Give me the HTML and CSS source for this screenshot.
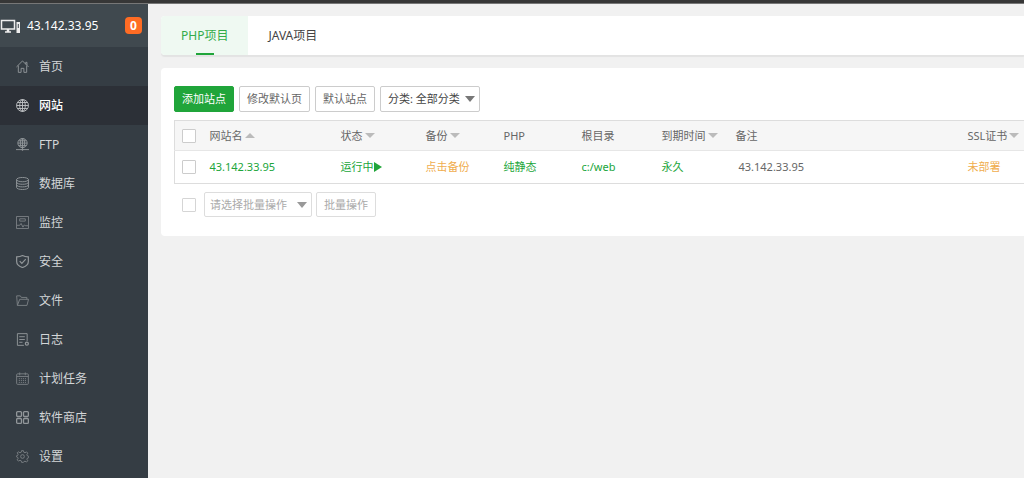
FILE: index.html
```html
<!DOCTYPE html>
<html lang="zh-CN">
<head>
<meta charset="utf-8">
<meta name="viewport" content="width=device-width, initial-scale=1">
<title>网站</title>
<link rel="stylesheet" href="styles.css">
</head>
<body>
<div class="topbar"></div>
<div class="layout">
  <aside class="sidebar">
    <div class="server">
      <svg class="server-icon" viewBox="0 0 20 14" fill="none" stroke="currentColor" stroke-width="1.500"><path d="M1.500 1.500h13v8.500H1.500zM5 13h6"/><path d="M8 10v3" stroke-width="2.500"/><path d="M16.500 3H20v11h-3.500z" fill="currentColor" stroke="none"/><path d="M18.300 5v4" stroke="#40494f" stroke-width="1"/></svg>
      <span class="server-ip">43.142.33.95</span>
      <span class="badge">0</span>
    </div>
    <nav class="menu">
      <a class="menu-item" href="#"><svg class="icon" viewBox="0 0 14 14"><path d="M.5 7.500 7 1l6.500 6.500M2.500 6v7.300h3V9h3v4.300h3V6M10.500 4.500V2.500h1.300V5.500"/></svg>首页</a>
      <a class="menu-item active" href="#"><svg class="icon" viewBox="0 0 14 14"><circle cx="7" cy="7" r="6.400"/><ellipse cx="7" cy="7" rx="3" ry="6.400"/><path d="M7 .6v12.800M.6 7h12.800M2 3.800h10M2 10.200h10"/></svg>网站</a>
      <a class="menu-item" href="#"><svg class="icon" viewBox="0 0 14 14"><circle cx="7" cy="5.500" r="5"/><ellipse cx="7" cy="5.500" rx="2.300" ry="5"/><path d="M2 5.500h10M3 3h8M3 8h8M7 .5v11M0 12.500h14"/><circle cx="7" cy="12.500" r=".8"/></svg>FTP</a>
      <a class="menu-item" href="#"><svg class="icon" viewBox="0 0 14 14"><ellipse cx="7" cy="2.800" rx="6.400" ry="2.300"/><path d="M.6 2.800v8.400c0 3 12.800 3 12.800 0V2.800M.6 5.600c0 3 12.800 3 12.800 0M.6 8.400c0 3 12.800 3 12.800 0"/></svg>数据库</a>
      <a class="menu-item" href="#"><svg class="icon dim" viewBox="0 0 14 14"><path d="M.5.5h13v13H.5zM4 3h6M4 5.500h6M4 3v2.500M10 3v2.500M1 10h3l1.500-2 2 4L9 9.500l1 1h3"/></svg>监控</a>
      <a class="menu-item" href="#"><svg class="icon" viewBox="0 0 14 14"><path d="M7 .6c2 1.200 4 1.500 6.300 1.500V7c0 3-2.500 5.200-6.300 6.500C3.200 12.200.7 10 .7 7V2.100C3 2.100 5 1.800 7 .6z" stroke-width="1.300"/><path d="m4 6.500 2.300 2.500L10.500 4.500" stroke-width="1.300"/></svg>安全</a>
      <a class="menu-item" href="#"><svg class="icon dim" viewBox="0 0 14 14"><path d="M1.500 12.300.7 2h4l1 1.700h6v2M1.500 12.300h10.300l1.700-6.600H4L1.500 12.300"/></svg>文件</a>
      <a class="menu-item" href="#"><svg class="icon" viewBox="0 0 14 14"><path d="M8.500 13.300H1.500V.7h10.500v7.800M3.500 4h6M3.500 7h6M3.500 10H7"/><circle cx="11.700" cy="11.500" r="1.600" stroke-width="1.400"/></svg>日志</a>
      <a class="menu-item" href="#"><svg class="icon dim" viewBox="0 0 14 14"><rect x=".7" y="2" width="12.600" height="11.300" rx="1"/><path d="M.7 4.800h12.600M4 .5v3M10 .5v3"/><path d="M3 7.200h8M3 9.200h8M3 11.200h8" stroke-dasharray="1.200 1"/></svg>计划任务</a>
      <a class="menu-item" href="#"><svg class="icon" viewBox="0 0 14 14" stroke-width="1.400"><rect x=".7" y=".7" width="5.200" height="5.200" rx="1"/><rect x="8.100" y=".7" width="5.200" height="5.200" rx="1"/><rect x=".7" y="8.100" width="5.200" height="5.200" rx="1"/><rect x="8.100" y="8.100" width="5.200" height="5.200" rx="1"/></svg>软件商店</a>
      <a class="menu-item" href="#"><svg class="icon dim" viewBox="0 0 14 14"><path d="M6 .7h2l.4 1.700 1.300.6 1.600-1 1.400 1.400-1 1.600.6 1.300 1.300.4v1.600l-1.300.5-.6 1.200 1 1.600-1.400 1.400-1.600-1-1.300.6L8 13.300H6l-.4-1.700-1.300-.6-1.600 1-1.400-1.400 1-1.600-.6-1.200L.5 7.300V6.300l1.200-.4.6-1.300-1-1.600L2.700 2l1.600 1 1.300-.6z"/><circle cx="7" cy="7" r="2"/></svg>设置</a>
    </nav>
  </aside>
  <main class="content">
    <nav class="tabs">
      <button class="tab selected" type="button">PHP项目</button>
      <button class="tab" type="button">JAVA项目</button>
    </nav>
    <section class="panel">
      <div class="toolbar">
        <button class="btn primary" type="button">添加站点</button>
        <button class="btn" type="button">修改默认页</button>
        <button class="btn" type="button">默认站点</button>
        <span class="select category"><select aria-label="分类"><option>分类: 全部分类</option></select></span>
      </div>
      <table class="sites">
        <colgroup><col class="c-check"><col class="c-name"><col class="c-status"><col class="c-backup"><col class="c-php"><col class="c-root"><col class="c-expire"><col class="c-note"><col></colgroup>
        <thead>
          <tr>
            <th><input class="check" type="checkbox" aria-label="全选"></th>
            <th>网站名<i class="sort up"></i></th>
            <th>状态<i class="sort"></i></th>
            <th>备份<i class="sort"></i></th>
            <th>PHP</th>
            <th>根目录</th>
            <th>到期时间<i class="sort"></i></th>
            <th>备注</th>
            <th>SSL证书<i class="sort"></i></th>
          </tr>
        </thead>
        <tbody>
          <tr>
            <td><input class="check" type="checkbox" aria-label="选择 43.142.33.95"></td>
            <td><a class="link" href="#">43.142.33.95</a></td>
            <td><a class="link" href="#">运行中<i class="play"></i></a></td>
            <td><a class="link warn" href="#">点击备份</a></td>
            <td><a class="link" href="#">纯静态</a></td>
            <td><a class="link" href="#">c:/web</a></td>
            <td><a class="link" href="#">永久</a></td>
            <td><span class="note">43.142.33.95</span></td>
            <td><a class="link warn" href="#">未部署</a></td>
          </tr>
        </tbody>
      </table>
      <div class="batch">
        <input class="check" type="checkbox" aria-label="批量选择">
        <span class="select action"><select aria-label="批量操作类型"><option>请选择批量操作</option></select></span>
        <button class="btn muted" type="button">批量操作</button>
      </div>
    </section>
  </main>
</div>
</body>
</html>
```
FILE: styles.css
```css
* { box-sizing: border-box; }
body {
  margin: 0;
  min-height: 100vh;
  display: flex;
  flex-direction: column;
  background: #f1f1f1;
  color: #666;
  font: 11px/16px "Noto Sans", "Noto Sans CJK SC", sans-serif;
  overflow-x: hidden;
}
button, select { font: inherit; color: inherit; }
a { text-decoration: none; }

.topbar { height: 4px; background: #373737; border-bottom: 1px solid #777; }
.layout { flex: 1; display: flex; }

.sidebar { width: 148px; flex: none; background: #353d44; font-size: 12px; }
.server {
  display: flex;
  align-items: center;
  height: 43px;
  padding-right: 6px;
  background: #40494f;
  color: #fff;
}
.server-icon { width: 20px; height: 14px; margin-right: 7px; color: #eee; }
.server-ip { flex: 1; }
.badge {
  width: 17px;
  height: 17px;
  border-radius: 4px;
  background: #ff6c24;
  font-weight: 700;
  line-height: 17px;
  text-align: center;
}
.menu-item {
  display: flex;
  align-items: center;
  gap: 10px;
  height: 39px;
  padding-left: 16px;
  color: #d3d6d8;
}
.menu-item.active { background: #2c3037; color: #fff; font-weight: 500; }
.icon { width: 13px; height: 13px; fill: none; stroke: #92979a; }
.icon.dim { stroke: #7b8185; }
.active .icon { stroke: #c0c2c5; }

.content { flex: 1; min-width: 0; padding: 12px 0 12px 13px; }
.tabs {
  display: flex;
  height: 39px;
  margin-bottom: 13px;
  border-radius: 4px 0 0 4px;
  background: #fff;
  box-shadow: 0 2px 1px #e3e3e3;
}
.tab {
  position: relative;
  padding: 0 20px;
  border: 0;
  background: none;
  color: #444;
  font-size: 12px;
}
.tab.selected { border-radius: 4px 0 0 4px; background: #eff9f2; color: #35ac4b; }
.tab.selected::after {
  content: "";
  position: absolute;
  bottom: 0;
  left: 50%;
  width: 18px;
  height: 2px;
  margin-left: -9px;
  background: #20a53a;
}

.panel { padding: 18px 0 19px 13px; border-radius: 4px 0 0 4px; background: #fff; }
.toolbar { display: flex; gap: 5px; margin-bottom: 8px; }
.btn, .select select {
  height: 26px;
  padding: 0 7px;
  border: 1px solid #ccc;
  border-radius: 2px;
  background: #fff;
  line-height: 16px;
}
.btn.primary { border-color: #20a53a; background: #20a53a; color: #fff; }
.select { position: relative; }
.select select { width: 100%; appearance: none; }
.select::after {
  content: "";
  position: absolute;
  top: 10px;
  right: 5px;
  border: 5px solid transparent;
  border-top: 6px solid #777;
  border-bottom: 0;
  pointer-events: none;
}
.category { width: 100px; color: #444; }

.sites {
  width: 100%;
  table-layout: fixed;
  border-collapse: collapse;
  border: 1px solid #ddd;
  border-right: 0;
}
.sites th, .sites td {
  padding: 0 0 0 7px;
  border-bottom: 1px solid #e6e6e6;
  font-weight: 400;
  text-align: left;
  white-space: nowrap;
}
.sites th { height: 30px; background: #f6f6f6; }
.sites td { height: 33px; border-bottom-color: #ddd; }
.c-check { width: 28px; }
.c-name { width: 131px; }
.c-status { width: 85px; }
.c-backup { width: 78px; }
.c-php { width: 78px; }
.c-root { width: 80px; }
.c-expire { width: 74px; }
.c-note { width: 232px; }
.check {
  display: block;
  width: 14px;
  height: 14px;
  margin: 0;
  appearance: none;
  border: 1px solid #ccc;
  border-radius: 1px;
  background: #fff;
}
.sort {
  display: inline-block;
  margin-left: 2px;
  vertical-align: 2px;
  border: 5px solid transparent;
  border-top-color: #bbb;
  border-bottom: 0;
}
.sort.up { border-top: 0; border-bottom: 5px solid #bbb; }
.link { color: #20a53a; }
.link.warn { color: #f0ad4e; }
.play {
  display: inline-block;
  vertical-align: -1px;
  border: 5px solid transparent;
  border-left: 8px solid #20a53a;
  border-right: 0;
}
.note { padding-left: 3px; }

.batch { display: flex; align-items: center; gap: 4px; padding: 8px 0 0 8px; color: #aaa; }
.batch .check { margin-right: 4px; border-color: #d5d5d5; }
.batch .btn, .batch select { height: 25px; border-color: #ddd; }
.batch select { padding: 0 5px; }
.action { width: 108px; }
.action::after { border-top-color: #999; }
```
